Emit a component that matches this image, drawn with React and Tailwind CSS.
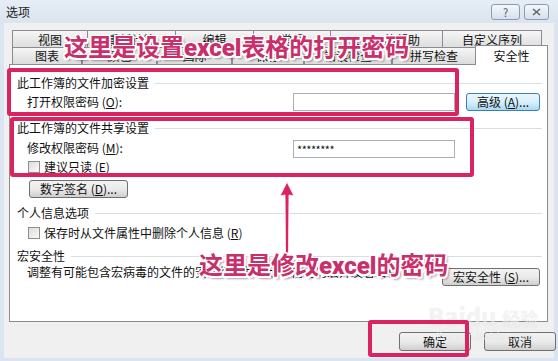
import React from "react";

const FONT = { fontFamily: '"Noto Sans CJK SC", "Noto Sans", sans-serif' };

const row1 = [
  ["视图", 76],
  ["重新计算", 89],
  ["编辑", 79],
  ["常规", 78],
  ["1-2-3 的帮助", 113],
  ["自定义序列", 100],
];
const row2 = [
  ["图表", 70],
  ["颜色", 75],
  ["国际", 75],
  ["保存", 72],
  ["错误检查", 88],
  ["拼写检查", 84],
];

function Tab({ label, w, h = "h-[18px]" }) {
  return (
    <div
      className={`${h} flex items-center justify-center border border-b-0 border-[#898c95] -ml-px first:ml-0 bg-gradient-to-b from-[#f6f6f6] to-[#dcdcdc] text-[12px] text-[#111] leading-none`}
      style={{ width: w }}
    >
      {label}
    </div>
  );
}

function Checkbox() {
  return (
    <div className="w-[12px] h-[12px] border border-[#8f8f8f] bg-gradient-to-br from-[#dcdcdc] to-[#fbfbfb] shrink-0" />
  );
}

function Btn({ children, w, blue }) {
  return (
    <div
      className={`h-[18px] flex items-center justify-center rounded-[3px] border text-[12px] leading-none shrink-0 ${
        blue
          ? "border-[#3c7fb1] bg-gradient-to-b from-[#eaf6fd] via-[#d9f0fc] to-[#a7d9f5]"
          : "border-[#707070] bg-gradient-to-b from-[#f2f2f2] via-[#ebebeb] to-[#cfcfcf]"
      }`}
      style={{ width: w }}
    >
      {children}
    </div>
  );
}

function Group({ label, h = "h-[18px]", mt }) {
  return (
    <div className={`${h} ${mt} flex items-center pl-[7px] pr-[5px] gap-[6px]`}>
      <span className="text-[12px] leading-none whitespace-nowrap">{label}</span>
      <div className="flex-1 h-px bg-[#d5dfe5]" />
    </div>
  );
}

const shadow =
  "[text-shadow:1.5px_0_0_#fff,-1.5px_0_0_#fff,0_1.5px_0_#fff,0_-1.5px_0_#fff,1.5px_1.5px_0_#fff,-1.5px_-1.5px_0_#fff,1.5px_-1.5px_0_#fff,-1.5px_1.5px_0_#fff,2.5px_2.5px_2px_rgba(80,40,60,0.45)]";

export default function App() {
  return (
    <div
      className="relative w-[558px] h-[361px] overflow-hidden bg-[#dbe5f1] flex flex-col text-[#111]"
      style={FONT}
    >
      {/* title bar */}
      <div className="h-[23px] shrink-0 flex items-center pl-[6px] pr-[9px] bg-gradient-to-b from-[#e6edf5] to-[#dbe4ef]">
        <span className="text-[12px] leading-none text-[#222]">选项</span>
        <div className="flex-1" />
        <div className="flex gap-[4px] mt-[1px]">
          <div className="w-[29px] h-[16px] rounded-[3px] border border-[#8c9bb0] bg-gradient-to-b from-[#f4f7fb] to-[#d6e0ec] flex items-center justify-center text-[11px] leading-none text-[#555]">
            ?
          </div>
          <div className="w-[25px] h-[16px] rounded-[3px] border border-[#8c9bb0] bg-gradient-to-b from-[#f4f7fb] to-[#d6e0ec] flex items-center justify-center">
            <svg width="9" height="8" viewBox="0 0 9 8">
              <path d="M1 1 L8 7 M8 1 L1 7" stroke="#666" strokeWidth="1.6" fill="none" />
            </svg>
          </div>
        </div>
      </div>

      {/* body */}
      <div className="mx-[4px] mb-[3px] flex-1 bg-[#f0f0f0] flex flex-col pt-[7px]">
        {/* tabs */}
        <div className="flex ml-[8px]">
          {row1.map(([l, w]) => (
            <Tab key={l} label={l} w={w} />
          ))}
        </div>
        <div className="relative z-10 -mt-px -mb-px h-[18px] flex items-end ml-[8px]">
          {row2.map(([l, w]) => (
            <div key={l} className="mb-px flex">
              <Tab label={l} w={w} h="h-[17px]" />
            </div>
          ))}
          <div className="-ml-px w-[73px] h-[20px] border border-b-0 border-[#898c95] bg-white flex items-center justify-center text-[12px] leading-none">
            安全性
          </div>
        </div>

        {/* panel */}
        <div className="ml-[5px] w-[539px] h-[258px] border border-[#898c95] bg-white flex flex-col text-[12px]">
          <Group label="此工作簿的文件加密设置" mt="mt-[9px]" />
          <div className="h-[20px] flex items-center pl-[17px]">
            <span className="w-[266px] leading-none">
              打开权限密码 (<u>O</u>):
            </span>
            <div className="w-[162px] h-[18px] border border-[#abadb3] bg-white" />
            <div className="ml-[11px]">
              <Btn w={74} blue>
                高级 (<u>A</u>)...
              </Btn>
            </div>
          </div>
          <Group label="此工作簿的文件共享设置" mt="mt-[7px]" />
          <div className="mt-[2px] h-[20px] flex items-center pl-[17px]">
            <span className="w-[266px] leading-none -mt-[3px]">
              修改权限密码 (<u>M</u>):
            </span>
            <div className="w-[162px] h-[18px] border border-[#abadb3] bg-white flex items-center pl-[3px] text-[11px] leading-none tracking-[-0.5px]">
              ********
            </div>
          </div>
          <div className="h-[16px] flex items-center pl-[18px] gap-[4px]">
            <Checkbox />
            <span className="leading-none">
              建议只读 (<u>E</u>)
            </span>
          </div>
          <div className="mt-[5px] pl-[19px]">
            <Btn w={99}>
              数字签名 (<u>D</u>)...
            </Btn>
          </div>
          <Group label="个人信息选项" h="h-[16px]" mt="mt-[7px]" />
          <div className="mt-[4px] h-[16px] flex items-center pl-[18px] gap-[4px]">
            <Checkbox />
            <span className="leading-none">
              保存时从文件属性中删除个人信息 (<u>R</u>)
            </span>
          </div>
          <Group label="宏安全性" h="h-[16px]" mt="mt-[7px]" />
          <div className="h-[24px] flex items-start pl-[17px]">
            <span className="w-[415px] h-[16px] flex items-center leading-none whitespace-nowrap overflow-hidden">
              调整有可能包含宏病毒的文件的安全级别并指定可信任的宏开发者名称
            </span>
            <div className="mt-[4px]">
              <Btn w={98}>
                宏安全性 (<u>S</u>)...
              </Btn>
            </div>
          </div>
        </div>

        {/* bottom buttons */}
        <div className="mt-[10px] flex justify-end gap-[13px]">
          <div className="w-[72px] h-[19px] rounded-[3px] border border-[#707070] bg-gradient-to-b from-[#f2f2f2] via-[#ebebeb] to-[#cfcfcf] flex items-center justify-center text-[12px] leading-none">
            确定
          </div>
          <div className="w-[72px] h-[19px] rounded-[3px] border border-[#707070] bg-gradient-to-b from-[#f2f2f2] via-[#ebebeb] to-[#cfcfcf] flex items-center justify-center text-[12px] leading-none -mr-[2px]">
            取消
          </div>
        </div>
      </div>

      {/* watermark */}
      <div className="absolute z-20 left-[428px] top-[304px] text-[24px] font-bold leading-none text-white/60 [text-shadow:0_0_1px_rgba(0,0,0,0.12)] pointer-events-none">
        Baidu <span className="text-[18px]">经验</span>
      </div>
      <div className="absolute z-20 left-[436px] top-[330px] text-[11px] leading-none text-white/60 [text-shadow:0_0_1px_rgba(0,0,0,0.12)] pointer-events-none">
        jingyan.baidu.com
      </div>

      {/* annotation boxes */}
      <div className="absolute z-20 left-[7px] top-[68px] w-[452px] h-[48px] border-[4px] border-[#d9245f] rounded-[3px] pointer-events-none" />
      <div className="absolute z-20 left-[10px] top-[117px] w-[464px] h-[60px] border-[4px] border-[#d9245f] rounded-[3px] pointer-events-none" />
      <div className="absolute z-20 left-[368px] top-[320px] w-[101px] h-[37px] border-[4px] border-[#d9245f] rounded-[3px] pointer-events-none" />

      {/* arrow */}
      <svg className="absolute z-20 left-[278px] top-[181px] pointer-events-none" width="18" height="74" viewBox="0 0 18 74">
        <path d="M9 1 L16 15 L11 14 L10.5 72 L7.5 72 L7 14 L2 15 Z" fill="#d9245f" stroke="#fff" strokeWidth="0.8" />
      </svg>

      {/* annotation texts */}
      <div
        className={`absolute z-30 left-[64px] top-[31px] text-[24px] font-bold leading-[30px] text-[#c8306c] whitespace-nowrap ${shadow}`}
      >
        这里是设置<span className="font-[Roboto] font-black">excel</span>表格的打开密码
      </div>
      <div
        className={`absolute z-30 left-[199px] top-[249px] text-[24px] font-bold leading-[30px] text-[#c8306c] whitespace-nowrap ${shadow}`}
      >
        这里是修改<span className="font-[Roboto] font-black">excel</span>的密码
      </div>
    </div>
  );
}
